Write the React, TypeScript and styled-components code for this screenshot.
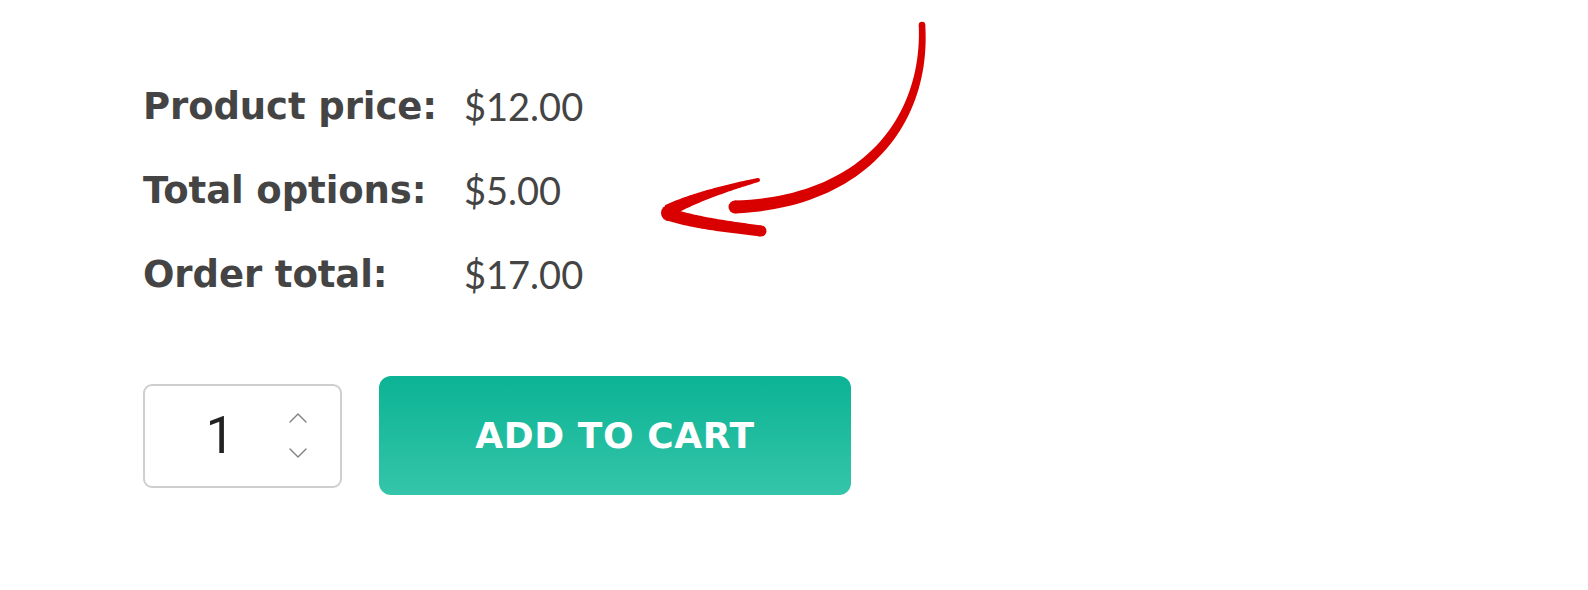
import React from "react";
import styled, { createGlobalStyle } from "styled-components";
import { ChevronUp, ChevronDown } from "lucide-react";

const GlobalStyle = createGlobalStyle`
  body {
    margin: 0;
    background: #ffffff;
  }
`;

const Page = styled.div`
  position: relative;
  width: 1588px;
  height: 590px;
  padding: 64px 0 0 143px;
  box-sizing: border-box;
  font-family: "DejaVu Sans", sans-serif;
`;

/* ---------------------------------------------------------------------------- */

const Summary = styled.div`
  display: grid;
  grid-template-columns: 321px auto;
  grid-auto-rows: 84px;
  align-items: center;
  color: #444444;
`;

const Label = styled.div`
  font-family: "DejaVu Sans", sans-serif;
  font-weight: 700;
  font-size: 37px;
  letter-spacing: -0.1px;
`;

const Value = styled.div`
  font-family: "Lato", sans-serif;
  font-weight: 400;
  font-size: 38px;
`;

const rows = [
  ["Product price:", "$12.00"],
  ["Total options:", "$5.00"],
  ["Order total:", "$17.00"],
];

/* ---------------------------------------------------------------------------- */

const Actions = styled.div`
  display: flex;
  align-items: center;
  gap: 37px;
  margin-top: 60px;
`;

const Qty = styled.div`
  display: flex;
  align-items: center;
  width: 199px;
  height: 104px;
  box-sizing: border-box;
  border: 2px solid #cfcfcf;
  border-radius: 9px;
  padding-left: 13px;
`;

const QtyNum = styled.span`
  width: 124px;
  text-align: center;
  font-family: "Roboto", sans-serif;
  font-weight: 400;
  font-size: 51px;
  color: #222222;
`;

const Stepper = styled.div`
  display: flex;
  flex-direction: column;
  gap: 3px;
  color: #808080;
`;

const CartButton = styled.button`
  width: 472px;
  height: 119px;
  border: none;
  border-radius: 12px;
  background: linear-gradient(180deg, #0bb394 0%, #35c5aa 100%);
  color: #ffffff;
  font-family: "DejaVu Sans", sans-serif;
  font-weight: 700;
  font-size: 36px;
  letter-spacing: 0.6px;
  cursor: pointer;
`;

/* ---------------------------------------------------------------------------- */

const Arrow = styled.svg`
  position: absolute;
  left: 640px;
  top: 10px;
  fill: #d90000;
`;

type Pt = [number, number];

// tapered brush stroke along a cubic bezier
const stroke = (p: Pt[], w0: number, w1: number, n = 48) => {
  const at = (t: number): Pt => {
    const u = 1 - t;
    const a = u * u * u, b = 3 * u * u * t, c = 3 * u * t * t, d = t * t * t;
    return [
      a * p[0][0] + b * p[1][0] + c * p[2][0] + d * p[3][0],
      a * p[0][1] + b * p[1][1] + c * p[2][1] + d * p[3][1],
    ];
  };
  const der = (t: number): Pt => {
    const u = 1 - t;
    return [
      3 * u * u * (p[1][0] - p[0][0]) + 6 * u * t * (p[2][0] - p[1][0]) + 3 * t * t * (p[3][0] - p[2][0]),
      3 * u * u * (p[1][1] - p[0][1]) + 6 * u * t * (p[2][1] - p[1][1]) + 3 * t * t * (p[3][1] - p[2][1]),
    ];
  };
  const left: string[] = [];
  const right: string[] = [];
  for (let i = 0; i <= n; i++) {
    const t = i / n;
    const [x, y] = at(t);
    const [dx, dy] = der(t);
    const len = Math.hypot(dx, dy) || 1;
    const w = (w0 + (w1 - w0) * t) / 2;
    const nx = -dy / len, ny = dx / len;
    left.push(`${(x + nx * w).toFixed(2)} ${(y + ny * w).toFixed(2)}`);
    right.push(`${(x - nx * w).toFixed(2)} ${(y - ny * w).toFixed(2)}`);
  }
  return "M " + left.join(" L ") + " L " + right.reverse().join(" L ") + " Z";
};

const shaft: Pt[] = [[282, 15], [287, 110], [225, 192], [95, 197]];
const upperBarb: Pt[] = [[118, 170], [90, 177], [52, 188], [28, 201]];
const lowerBarb: Pt[] = [[28, 204], [55, 213], [90, 217], [121, 221]];

export default function App() {
  return (
    <Page>
      <GlobalStyle />
      <Summary>
        {rows.map(([l, v]) => (
          <React.Fragment key={l}>
            <Label>{l}</Label>
            <Value>{v}</Value>
          </React.Fragment>
        ))}
      </Summary>
      <Actions>
        <Qty>
          <QtyNum>1</QtyNum>
          <Stepper>
            <ChevronUp size={32} strokeWidth={1} />
            <ChevronDown size={32} strokeWidth={1} />
          </Stepper>
        </Qty>
        <CartButton>ADD TO CART</CartButton>
      </Actions>
      <Arrow width="300" height="240" viewBox="0 0 300 240">
        <path d={stroke(shaft, 6.5, 13)} />
        <circle cx={282} cy={15} r={3.25} />
        <circle cx={95} cy={197} r={6.5} />
        <path d={stroke(upperBarb, 4, 13)} />
        <circle cx={118} cy={170} r={2} />
        <path d={stroke(lowerBarb, 13, 11)} />
        <circle cx={121} cy={221} r={5.5} />
        <circle cx={29} cy={203} r={8} />
      </Arrow>
    </Page>
  );
}
